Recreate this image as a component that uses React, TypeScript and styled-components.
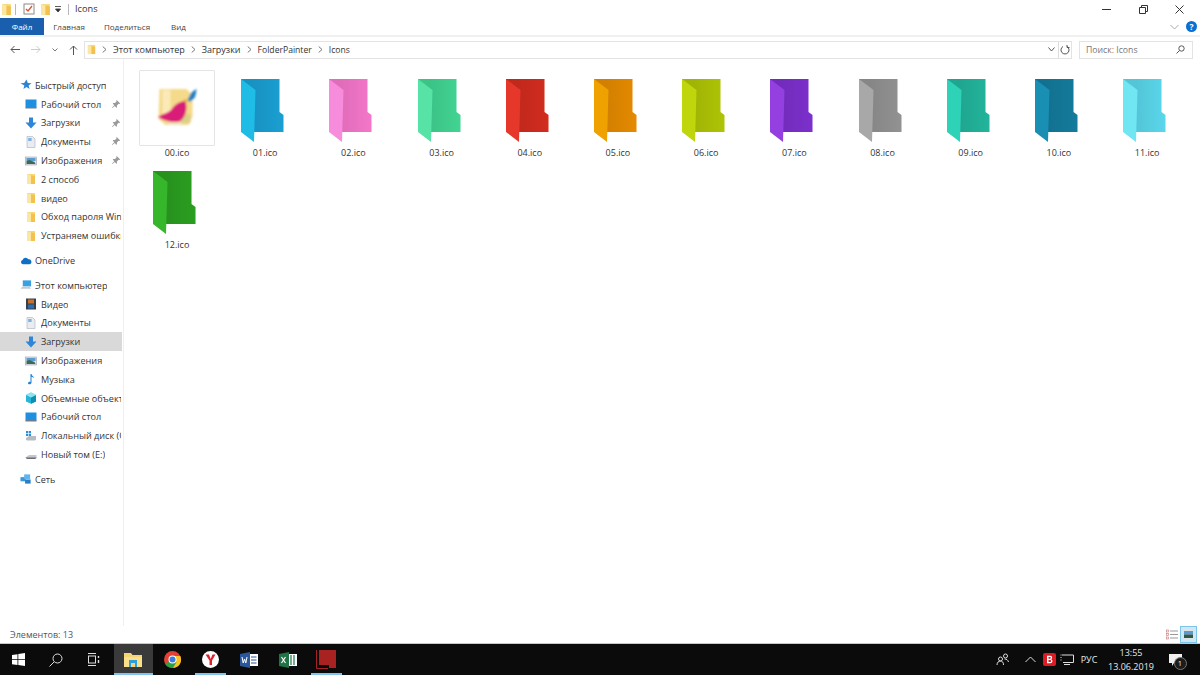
import styled, { createGlobalStyle } from "styled-components";
import { ReactNode } from "react";

const GlobalStyle = createGlobalStyle`
  html, body { margin: 0; padding: 0; background: #fff; overflow: hidden; }
  * { box-sizing: border-box; }
  body { font-family: "Open Sans", "Noto Sans", "Liberation Sans", sans-serif; color: #222; }
`;

const Page = styled.div`
  width: 1200px;
  height: 675px;
  display: flex;
  flex-direction: column;
`;

const TitleBar = styled.div`
  height: 18px;
  display: flex;
  align-items: center;
  padding-left: 0;
  font-size: 9.5px;
`;
const TitleSep = styled.span<{ $l: number; $r: number }>`
  width: 1px;
  height: 11px;
  background: #b8b8b8;
  margin: 0 ${(p) => p.$r}px 0 ${(p) => p.$l}px;
`;
const TitleGap = styled.span<{ $w: number }>`
  width: ${(p) => p.$w}px;
`;
const TitleText = styled.span`
  color: #333;
  font-size: 9.2px;
  margin-top: -1px;
`;
const WindowBtns = styled.div`
  margin-left: auto;
  display: flex;
  align-items: center;
  gap: 27.5px;
  padding-right: 16px;
`;

const RibbonRow = styled.div`
  height: 17px;
  display: flex;
  align-items: stretch;
`;
const FileTab = styled.div`
  width: 44px;
  background: #1a5fae;
  color: #fff;
  font-size: 8px;
  display: flex;
  align-items: center;
  justify-content: center;
`;
const RibbonTab = styled.div<{ $w: number }>`
  width: ${(p) => p.$w}px;
  font-size: 8px;
  color: #444;
  display: flex;
  align-items: center;
  justify-content: center;
`;
const RibbonRight = styled.div`
  margin-left: auto;
  display: flex;
  align-items: center;
  gap: 7px;
  padding-right: 3px;
`;
const HelpDot = styled.div`
  width: 11px;
  height: 11px;
  border-radius: 50%;
  background: #0a6fd0;
  color: #fff;
  font-size: 8.5px;
  font-weight: 700;
  display: flex;
  align-items: center;
  justify-content: center;
`;

const AddressRow = styled.div`
  height: 24px;
  border-top: 2px solid #f0f0f0;
  display: flex;
  align-items: center;
  padding: 3px 7px 0 0;
`;
const NavBtns = styled.div`
  width: 84px;
  display: flex;
  align-items: center;
  padding-left: 10px;
  gap: 11px;
`;
const AddressBox = styled.div`
  width: 988px;
  height: 18px;
  border: 1px solid #e3e3e3;
  display: flex;
  align-items: center;
  padding-left: 1px;
  font-size: 9px;
  color: #333;
`;
const AddressGap = styled.span`
  width: 5px;
`;
const Crumb = styled.span<{ $latin?: boolean }>`
  margin-right: 6px;
  font-size: ${(p) => (p.$latin ? 8.6 : 9)}px;
`;
const ChevronMark = styled.svg`
  margin-right: 6px;
  flex-shrink: 0;
`;
const AddressEnd = styled.div`
  margin-left: auto;
  display: flex;
  align-items: center;
  height: 100%;
`;
const AddressEndBtn = styled.div<{ $line?: boolean }>`
  width: 13px;
  height: 100%;
  display: flex;
  align-items: center;
  justify-content: center;
  border-left: ${(p) => (p.$line ? "1px solid #dcdcdc" : "0")};
`;
const SearchBox = styled.div`
  width: 114px;
  height: 18px;
  margin-left: 7px;
  border: 1px solid #e3e3e3;
  display: flex;
  align-items: center;
  justify-content: space-between;
  padding: 0 7px 0 6px;
  font-size: 8.7px;
  color: #777;
`;

const Body = styled.div`
  flex: 1;
  display: flex;
  min-height: 0;
`;
const Sidebar = styled.div`
  width: 124px;
  padding-top: 17px;
  border-right: 1px solid #f0f0f0;
  overflow: hidden;
  flex-shrink: 0;
`;
const NavRow = styled.div<{ $level: number; $active?: boolean; $gapTop?: number }>`
  width: 122px;
  height: 18.8px;
  margin-top: ${(p) => p.$gapTop ?? 0}px;
  padding-left: ${(p) => (p.$level === 0 ? 20 : 25)}px;
  padding-right: 1px;
  display: flex;
  align-items: center;
  gap: ${(p) => (p.$level === 0 ? 3 : 4)}px;
  background: ${(p) => (p.$active ? "#d9d9d9" : "transparent")};
  font-size: 9.1px;
  color: #333;
  white-space: nowrap;
  position: relative;
`;
const NavIcon = styled.span`
  width: 12px;
  height: 12px;
  flex-shrink: 0;
  display: flex;
  align-items: center;
  justify-content: center;
`;
const NavLabel = styled.span`
  overflow: hidden;
  min-width: 0;
`;
const Pin = styled.span`
  position: absolute;
  left: 111px;
  top: 4px;
  display: flex;
`;

const Files = styled.div`
  flex: 1;
  display: grid;
  grid-template-columns: repeat(12, 88.2px);
  grid-auto-rows: 92.4px;
  align-content: start;
  padding: 11px 0 0 15px;
`;
const FileItem = styled.div`
  width: 76px;
  height: 90px;
  display: flex;
  flex-direction: column;
  align-items: center;
`;
const Thumb = styled.div<{ $selected?: boolean }>`
  width: 76px;
  height: 76px;
  border: 1px solid ${(p) => (p.$selected ? "#e4e4e4" : "transparent")};
  border-radius: 1px;
  display: flex;
  justify-content: center;
  align-items: flex-start;
  padding: 8px 5px 0 0;
`;
const FileName = styled.div`
  font-size: 9px;
  color: #333;
  margin-top: 1px;
  line-height: 12px;
`;

const StatusBar = styled.div`
  height: 18px;
  display: flex;
  align-items: center;
  padding-left: 10px;
  font-size: 9px;
  color: #555;
  border-bottom: 1px solid #c8c8c8;
`;
const ViewBtns = styled.div`
  margin-left: auto;
  display: flex;
  align-items: center;
  padding-right: 3px;
`;
const ViewBtn = styled.div<{ $on?: boolean }>`
  width: 17px;
  height: 17px;
  display: flex;
  align-items: center;
  justify-content: center;
  background: ${(p) => (p.$on ? "#cfe8f8" : "transparent")};
  border: 1px solid ${(p) => (p.$on ? "#7cc4ea" : "transparent")};
`;

const Taskbar = styled.div`
  height: 31px;
  background: #0b0b0b;
  display: flex;
  align-items: stretch;
  color: #e8e8e8;
`;
const TaskBtn = styled.div<{ $w?: number; $active?: boolean; $open?: boolean }>`
  width: ${(p) => p.$w ?? 38.6}px;
  display: flex;
  align-items: center;
  justify-content: center;
  background: ${(p) => (p.$active ? "#3a3a3a" : "transparent")};
  position: relative;
  &::after {
    content: "";
    display: ${(p) => (p.$open ? "block" : "none")};
    position: absolute;
    left: ${(p) => (p.$active ? 0 : 4)}px;
    right: ${(p) => (p.$active ? 0 : 4)}px;
    bottom: 0;
    height: 2px;
    background: #7fc3ee;
  }
`;
const Tray = styled.div`
  margin-left: auto;
  display: flex;
  align-items: center;
  font-size: 9px;
  padding-right: 12px;
`;
const TrayItem = styled.div<{ $w: number }>`
  width: ${(p) => p.$w}px;
  display: flex;
  align-items: center;
  justify-content: center;
`;
const Clock = styled.div`
  width: 62px;
  text-align: center;
  font-size: 9px;
  line-height: 14px;
`;
const BadgeNum = styled.span`
  position: absolute;
  right: -5px;
  bottom: -4px;
  width: 13px;
  height: 13px;
  border-radius: 50%;
  background: #1c1c1c;
  border: 1px solid #777;
  color: #eee;
  font-size: 7.5px;
  display: flex;
  align-items: center;
  justify-content: center;
`;
const NotifyWrap = styled.div`
  position: relative;
  display: flex;
`;

const YellowFolder = ({ size = 12 }: { size?: number }) => (
  <svg width={size} height={size} viewBox="0 0 12 12">
    <path d="M2 1h8v10H2z" fill="#f8d775" />
    <path d="M2 1l4 1.5V11H2z" fill="#fbe6a4" />
    <path d="M6 2.5V11h4V3z" fill="#f2c14e" />
  </svg>
);

const FolderIcon = ({ id, back, front }: { id: string; back: string; front: string }) => (
  <svg width="43" height="64" viewBox="0 0 43 64">
    <defs>
      <linearGradient id={`shade-${id}`} x1="0" y1="0" x2="1" y2="0">
        <stop offset="0.3" stopColor="#000" stopOpacity="0.08" />
        <stop offset="1" stopColor="#000" stopOpacity="0" />
      </linearGradient>
    </defs>
    <path d="M0 0h38.5v33l4 3v17H0z" fill={back} />
    <path d="M0 0h38.5v33l4 3v17H0z" fill={`url(#shade-${id})`} />
    <path d="M0 0l14.500 11-1.500 52L0 53z" fill={front} />
  </svg>
);

const PinIcon = () => (
  <svg width="10" height="10" viewBox="0 0 10 10">
    <path d="M5.5 0.8l3.7 3.7-1 .6-.6-.3-1.7 1.7.1 1.7-.7.6-1.6-1.7L1.4 9l-.4-.4 2.3-2.4L1.7 4.6l.6-.7 1.7.1 1.7-1.7-.3-.6z" fill="#9a9a9a" />
  </svg>
);

const DesktopIcon = () => (
  <svg width="12" height="12" viewBox="0 0 12 12">
    <rect x="0.5" y="1.5" width="11" height="8" fill="#1f8fe0" />
    <rect x="0.5" y="9" width="11" height="1.5" fill="#6c7c8c" />
  </svg>
);
const DownloadIcon = () => (
  <svg width="12" height="12" viewBox="0 0 12 12">
    <path d="M4 0.5h4V5.5h3.5L6 11.5 .5 5.5H4z" fill="#2f85d8" />
  </svg>
);
const DocIcon = () => (
  <svg width="12" height="12" viewBox="0 0 12 12">
    <path d="M2 0.5h5.5L10 3v8.5H2z" fill="#e9edf2" stroke="#a8b0ba" strokeWidth=".6" />
    <rect x="3.2" y="2" width="3.4" height="3" fill="#7fb2e0" />
  </svg>
);
const PictureIcon = () => (
  <svg width="12" height="12" viewBox="0 0 12 12">
    <rect x="0.5" y="2" width="11" height="8" fill="#dfe3e8" stroke="#9aa0a8" strokeWidth=".6" />
    <path d="M1.5 3h9v3H1.5z" fill="#5a9ad0" />
    <path d="M1.5 6l3-1 5 2 1 2h-9z" fill="#3c6a58" />
  </svg>
);
const VideoIcon = () => (
  <svg width="12" height="12" viewBox="0 0 12 12">
    <rect x="1" y="0.5" width="10" height="11" fill="#3a3f46" />
    <rect x="3" y="1.5" width="6" height="4" fill="#c8702c" />
    <rect x="3" y="6.5" width="6" height="4" fill="#2d6eb0" />
  </svg>
);
const MusicIcon = () => (
  <svg width="12" height="12" viewBox="0 0 12 12">
    <path d="M5.5 1h1c.3 1.8 2 2.2 2.6 4-.8-.8-1.6-1.1-2.6-1.3V9.5C6.5 10.800 5.200 11.500 4 11.300 2.900 11.100 2.700 10 3.500 9.300 4.100 8.800 4.900 8.700 5.500 8.900z" fill="#1e80d8" />
  </svg>
);
const CubeIcon = () => (
  <svg width="12" height="12" viewBox="0 0 12 12">
    <path d="M6 0.500L11 3v6.500L6 11.800 1 9.500V3z" fill="#25b5d8" />
    <path d="M6 5.500L11 3v6.500L6 11.800z" fill="#0f8fb0" />
    <path d="M6 0.500L11 3 6 5.500 1 3z" fill="#8fe4f2" />
  </svg>
);
const DiskCIcon = () => (
  <svg width="12" height="12" viewBox="0 0 12 12">
    <path d="M1 8l3-2h7v3.500l-1 1H2L1 9.500z" fill="#b8bcc2" />
    <rect x="1" y="1" width="2.200" height="2.200" fill="#2a8fdc" />
    <rect x="3.800" y="1" width="2.200" height="2.200" fill="#2a8fdc" />
    <rect x="1" y="3.800" width="2.200" height="2.200" fill="#2a8fdc" />
    <rect x="3.800" y="3.800" width="2.200" height="2.200" fill="#2a8fdc" />
  </svg>
);
const DiskIcon = () => (
  <svg width="12" height="12" viewBox="0 0 12 12">
    <path d="M0.500 8.500l3.500-2.500h7.500v2.500l-1.500 1.500H2z" fill="#c4c7cb" />
    <path d="M2 10l-1.500-1.500h11V9l-1.500 1z" fill="#6b6f75" />
  </svg>
);
const StarIcon = () => (
  <svg width="12" height="12" viewBox="0 0 12 12">
    <path d="M6.500 .5l1.300 3.500 3.700.2-2.900 2.300 1 3.600-3.100-2-3.100 2 1-3.600L0.500 4.200l3.700-.2z" fill="#2d82d6" />
  </svg>
);
const CloudIcon = () => (
  <svg width="13" height="12" viewBox="0 0 13 12">
    <path d="M3 9.500a2.300 2.300 0 0 1-.2-4.500A3.400 3.400 0 0 1 9 4.100a2.700 2.700 0 0 1 1.200 5.400z" fill="#0f6fc6" />
  </svg>
);
const PcIcon = () => (
  <svg width="13" height="12" viewBox="0 0 13 12">
    <rect x="3" y="1" width="9" height="6.500" fill="#3aa0e4" />
    <path d="M0.500 10l2-2h8l1.500 2z" fill="#c6cbd1" />
  </svg>
);
const NetworkIcon = () => (
  <svg width="13" height="12" viewBox="0 0 13 12">
    <rect x="0.500" y="4" width="5.500" height="4.500" fill="#3a97dc" />
    <rect x="4.500" y="1" width="6.500" height="5" fill="#62b4ec" />
    <rect x="5.500" y="6.500" width="6" height="4.500" fill="#2a7ec4" />
  </svg>
);

type NavEntry = { label: string; level: number; icon: ReactNode; pin?: boolean; active?: boolean; gapTop?: number };

const navItems: NavEntry[] = [
  { label: "Быстрый доступ", level: 0, icon: <StarIcon /> },
  { label: "Рабочий стол", level: 1, icon: <DesktopIcon />, pin: true },
  { label: "Загрузки", level: 1, icon: <DownloadIcon />, pin: true },
  { label: "Документы", level: 1, icon: <DocIcon />, pin: true },
  { label: "Изображения", level: 1, icon: <PictureIcon />, pin: true },
  { label: "2 способ", level: 1, icon: <YellowFolder /> },
  { label: "видео", level: 1, icon: <YellowFolder /> },
  { label: "Обход пароля Windows", level: 1, icon: <YellowFolder /> },
  { label: "Устраняем ошибки", level: 1, icon: <YellowFolder /> },
  { label: "OneDrive", level: 0, icon: <CloudIcon />, gapTop: 6 },
  { label: "Этот компьютер", level: 0, icon: <PcIcon />, gapTop: 6 },
  { label: "Видео", level: 1, icon: <VideoIcon /> },
  { label: "Документы", level: 1, icon: <DocIcon /> },
  { label: "Загрузки", level: 1, icon: <DownloadIcon />, active: true },
  { label: "Изображения", level: 1, icon: <PictureIcon /> },
  { label: "Музыка", level: 1, icon: <MusicIcon /> },
  { label: "Объемные объекты", level: 1, icon: <CubeIcon /> },
  { label: "Рабочий стол", level: 1, icon: <DesktopIcon /> },
  { label: "Локальный диск (C:)", level: 1, icon: <DiskCIcon /> },
  { label: "Новый том (E:)", level: 1, icon: <DiskIcon /> },
  { label: "Сеть", level: 0, icon: <NetworkIcon />, gapTop: 6 },
];

const folders = [
  { name: "01.ico", back: "#1a9fd2", front: "#1fbce6" },
  { name: "02.ico", back: "#f476ca", front: "#f78cdc" },
  { name: "03.ico", back: "#41d492", front: "#57e2a6" },
  { name: "04.ico", back: "#d22c1e", front: "#e5382a" },
  { name: "05.ico", back: "#e58a00", front: "#efa100" },
  { name: "06.ico", back: "#aec405", front: "#c0d60c" },
  { name: "07.ico", back: "#7c30cc", front: "#9440e0" },
  { name: "08.ico", back: "#929292", front: "#a8a8a8" },
  { name: "09.ico", back: "#22b49c", front: "#2ed2b6" },
  { name: "10.ico", back: "#147b9c", front: "#1a8fb4" },
  { name: "11.ico", back: "#5ad6ea", front: "#70e6f2" },
  { name: "12.ico", back: "#2a9e20", front: "#36b62a" },
];

const PainterIcon = () => (
  <svg width="64" height="64" viewBox="0 0 64 64">
    <defs>
      <filter id="soft" x="-10%" y="-10%" width="120%" height="120%">
        <feGaussianBlur stdDeviation="0.8" />
      </filter>
    </defs>
    <g filter="url(#soft)" transform="translate(2.5 0)">
      <path d="M14 10h27l6 6v22l-4 8H20l-7-6z" fill="#f4da8a" />
      <path d="M17 11h8v24h-8z" fill="#fbeab8" />
      <path d="M35 35h10v9H35z" fill="#dcd088" />
      <path d="M22 43h14v3H22z" fill="#efe2b4" />
      <path d="M12.500 38C18 34 24 34 27 29C30 25 35 22 40 22C42 28 41 37 35 42C30 44 20 43 12.500 38z" fill="#d91d78" />
      <path d="M42 21l3-6c1-2 4-4 6-5 0 3-1 7-2 9-2 2-4 3-5 4z" fill="#2280c0" />
      <path d="M39 20l3 1-1 3-3-2z" fill="#e8b020" />
    </g>
  </svg>
);

const Chevron = () => (
  <ChevronMark width="5" height="7" viewBox="0 0 5 7">
    <path d="M.7.5L4 3.500.7 6.500" fill="none" stroke="#777" />
  </ChevronMark>
);

const App = () => (
  <>
    <GlobalStyle />
    <Page>
      <TitleBar>
        <YellowFolder size={13} />
        <TitleSep $l={2} $r={7} />
        <svg width="12" height="12" viewBox="0 0 12 12">
          <rect x="1" y="1" width="10" height="10" fill="#fff" stroke="#8a8a8a" />
          <path d="M3 6l2 2 4-5" fill="none" stroke="#e0502a" strokeWidth="1.300" />
        </svg>
        <TitleGap $w={4} />
        <YellowFolder size={13} />
        <TitleGap $w={2} />
        <svg width="8" height="8" viewBox="0 0 8 8">
          <path d="M1 1.500h6M1.500 4h5L4 7z" stroke="#333" strokeWidth=".8" fill="#333" />
        </svg>
        <TitleSep $l={6} $r={6} />
        <TitleText>Icons</TitleText>
        <WindowBtns>
          <svg width="9" height="9" viewBox="0 0 9 9">
            <path d="M0 4.500h9" stroke="#333" />
          </svg>
          <svg width="9" height="9" viewBox="0 0 9 9">
            <path d="M.5 2.500h6v6h-6zM2.500 2.500v-2h6v6h-2" fill="none" stroke="#333" />
          </svg>
          <svg width="9" height="9" viewBox="0 0 9 9">
            <path d="M.5.5l8 8M8.500.5l-8 8" stroke="#333" />
          </svg>
        </WindowBtns>
      </TitleBar>

      <RibbonRow>
        <FileTab>Файл</FileTab>
        <RibbonTab $w={50}>Главная</RibbonTab>
        <RibbonTab $w={66}>Поделиться</RibbonTab>
        <RibbonTab $w={37}>Вид</RibbonTab>
        <RibbonRight>
          <svg width="9" height="6" viewBox="0 0 9 6">
            <path d="M.5 1l4 4 4-4" fill="none" stroke="#aaa" />
          </svg>
          <HelpDot>?</HelpDot>
        </RibbonRight>
      </RibbonRow>

      <AddressRow>
        <NavBtns>
          <svg width="10" height="9" viewBox="0 0 10 9">
            <path d="M10 4.500H1M4.500 1L1 4.500 4.500 8" fill="none" stroke="#555" />
          </svg>
          <svg width="10" height="9" viewBox="0 0 10 9">
            <path d="M0 4.500h9M5.500 1L9 4.500 5.500 8" fill="none" stroke="#ccc" />
          </svg>
          <svg width="6" height="4" viewBox="0 0 6 4">
            <path d="M.5.500L3 3 5.500.500" fill="none" stroke="#777" />
          </svg>
          <svg width="9" height="10" viewBox="0 0 9 10">
            <path d="M4.500 10V1M1 4.500L4.500 1 8 4.500" fill="none" stroke="#555" />
          </svg>
        </NavBtns>
        <AddressBox>
          <YellowFolder size={11} />
          <AddressGap />
          <Chevron />
          <Crumb>Этот компьютер</Crumb>
          <Chevron />
          <Crumb>Загрузки</Crumb>
          <Chevron />
          <Crumb $latin>FolderPainter</Crumb>
          <Chevron />
          <Crumb $latin>Icons</Crumb>
          <AddressEnd>
            <AddressEndBtn>
              <svg width="7" height="5" viewBox="0 0 7 5">
                <path d="M.5.500L3.500 4 6.500.500" fill="none" stroke="#555" />
              </svg>
            </AddressEndBtn>
            <AddressEndBtn $line>
              <svg width="10" height="10" viewBox="0 0 10 10">
                <path d="M3 1.500A4 4 0 1 0 7 1.500M7 0v2.500h2.500" fill="none" stroke="#555" />
              </svg>
            </AddressEndBtn>
          </AddressEnd>
        </AddressBox>
        <SearchBox>
          <span>Поиск: Icons</span>
          <svg width="9" height="9" viewBox="0 0 9 9">
            <circle cx="5.500" cy="3.500" r="2.700" fill="none" stroke="#555" />
            <path d="M3.500 5.500L.5 8.500" stroke="#555" />
          </svg>
        </SearchBox>
      </AddressRow>

      <Body>
        <Sidebar>
          {navItems.map((item, i) => (
            <NavRow key={i} $level={item.level} $active={item.active} $gapTop={item.gapTop}>
              <NavIcon>{item.icon}</NavIcon>
              <NavLabel>{item.label}</NavLabel>
              {item.pin && (
                <Pin>
                  <PinIcon />
                </Pin>
              )}
            </NavRow>
          ))}
        </Sidebar>
        <Files>
          <FileItem>
            <Thumb $selected>
              <PainterIcon />
            </Thumb>
            <FileName>00.ico</FileName>
          </FileItem>
          {folders.map((f) => (
            <FileItem key={f.name}>
              <Thumb>
                <FolderIcon id={f.name} back={f.back} front={f.front} />
              </Thumb>
              <FileName>{f.name}</FileName>
            </FileItem>
          ))}
        </Files>
      </Body>

      <StatusBar>
        Элементов: 13
        <ViewBtns>
          <ViewBtn>
            <svg width="12" height="11" viewBox="0 0 12 11">
              <path d="M4 2h8M4 5.500h8M4 9h8" stroke="#999" />
              <rect x="0.500" y="1" width="2" height="2" fill="none" stroke="#c88" strokeWidth=".7" />
              <rect x="0.500" y="4.500" width="2" height="2" fill="none" stroke="#c88" strokeWidth=".7" />
              <rect x="0.500" y="8" width="2" height="2" fill="none" stroke="#c88" strokeWidth=".7" />
            </svg>
          </ViewBtn>
          <ViewBtn $on>
            <svg width="11" height="9" viewBox="0 0 11 9">
              <rect width="11" height="9" fill="#dfe3e8" />
              <rect x="1" y="1" width="9" height="3.500" fill="#5a9ad0" />
              <path d="M1 4.500h9V8H1z" fill="#2f5a48" />
            </svg>
          </ViewBtn>
        </ViewBtns>
      </StatusBar>

      <Taskbar>
        <TaskBtn $w={37}>
          <svg width="13" height="13" viewBox="0 0 13 13">
            <path d="M0 2l5.500-.8v5H0zM6.300 1.100L13 0v6.200H6.300zM0 7h5.500v5L0 11.200zM6.300 7H13v6l-6.700-1z" fill="#fff" />
          </svg>
        </TaskBtn>
        <TaskBtn>
          <svg width="14" height="14" viewBox="0 0 14 14">
            <circle cx="8.500" cy="5.500" r="4.500" fill="none" stroke="#ddd" />
            <path d="M5 9l-4.500 4.500" stroke="#ddd" />
          </svg>
        </TaskBtn>
        <TaskBtn>
          <svg width="14" height="13" viewBox="0 0 14 13">
            <rect x="0.500" y="3" width="7" height="7" fill="none" stroke="#ddd" />
            <path d="M0 .5h8M0 12.500h8" stroke="#ddd" />
            <path d="M10.500 3v2M10.500 7v3" stroke="#ddd" strokeWidth="1.400" />
          </svg>
        </TaskBtn>
        <TaskBtn $active $open>
          <svg width="18" height="15" viewBox="0 0 18 15">
            <path d="M0 1h7l1.500 2H18v12H0z" fill="#f5d376" />
            <rect x="0" y="5" width="18" height="10" fill="#fbe08a" />
            <rect x="5" y="8" width="8" height="7" fill="#2f9ee0" />
            <rect x="7" y="11" width="4" height="4" fill="#f5d376" />
          </svg>
        </TaskBtn>
        <TaskBtn>
          <svg width="17" height="17" viewBox="0 0 17 17">
            <circle cx="8.500" cy="8.500" r="8.500" fill="#e34133" />
            <path d="M8.500 17a8.500 8.500 0 0 0 7.800-12L8.500 5z" fill="#f7c325" />
            <path d="M8.500 8.500L1.100 12.800A8.500 8.500 0 0 0 9 17l3.500-6z" fill="#2f9e44" />
            <circle cx="8.500" cy="8.500" r="4" fill="#fff" />
            <circle cx="8.500" cy="8.500" r="3" fill="#3b7de0" />
          </svg>
        </TaskBtn>
        <TaskBtn $open>
          <svg width="17" height="17" viewBox="0 0 17 17">
            <circle cx="8.500" cy="8.500" r="8.500" fill="#fff" />
            <path d="M3.500 3.500l3.500 0L8.700 8 10.500 3.500H13.500L10 9.500V14H7.500V9.500z" fill="#e0202a" />
          </svg>
        </TaskBtn>
        <TaskBtn>
          <svg width="18" height="16" viewBox="0 0 18 16">
            <rect x="6" y="2" width="12" height="12" fill="#fff" />
            <path d="M11 5h5.500M11 8h5.500M11 11h5.500" stroke="#2b579a" strokeWidth="1.200" />
            <path d="M0 2l10-2v16L0 14z" fill="#2b579a" />
            <path d="M2 5l1.200 6 1.300-4 1.300 4L7 5" fill="none" stroke="#fff" />
          </svg>
        </TaskBtn>
        <TaskBtn>
          <svg width="18" height="16" viewBox="0 0 18 16">
            <rect x="6" y="2" width="12" height="12" fill="#fff" />
            <path d="M12 3v10M15 3v10" stroke="#217346" strokeWidth="1.200" />
            <path d="M0 2l10-2v16L0 14z" fill="#217346" />
            <path d="M2.500 5l4 6M6.500 5l-4 6" fill="none" stroke="#fff" strokeWidth="1.200" />
          </svg>
        </TaskBtn>
        <TaskBtn $open>
          <svg width="20" height="19" viewBox="0 0 20 19">
            <rect x="3" y="0" width="17" height="15" fill="#a82222" />
            <rect x="13" y="15" width="7" height="3" fill="#a82222" />
            <path d="M.5 0v18.500H12" fill="none" stroke="#a82222" />
          </svg>
        </TaskBtn>
        <Tray>
          <TrayItem $w={32}>
            <svg width="13" height="13" viewBox="0 0 13 13">
              <circle cx="4.500" cy="6" r="2" fill="none" stroke="#ddd" />
              <circle cx="9.500" cy="3" r="2" fill="none" stroke="#ddd" />
              <path d="M1 12c0-2.500 1.500-4 3.500-4s3 1.500 3 4M8.500 6c2 0 3.500 1 4 3" fill="none" stroke="#ddd" />
            </svg>
          </TrayItem>
          <TrayItem $w={24}>
            <svg width="11" height="7" viewBox="0 0 11 7">
              <path d="M.5 6l5-5 5 5" fill="none" stroke="#ddd" />
            </svg>
          </TrayItem>
          <TrayItem $w={14}>
            <svg width="13" height="13" viewBox="0 0 13 13">
              <rect width="13" height="13" rx="2" fill="#dc1c24" />
              <path d="M4 2.800h3.200c2.400 0 2.400 3 .8 3.400 2 .4 2 4-.8 4H4zM5.500 4v1.700h1.600c.9 0 .9-1.700 0-1.700zM5.500 6.900V9h1.800c1.100 0 1.100-2.100 0-2.100z" fill="#fff" />
            </svg>
          </TrayItem>
          <TrayItem $w={22}>
            <svg width="14" height="12" viewBox="0 0 14 12">
              <path d="M2 1h11.500v7.500H3M4 10.500h6" fill="none" stroke="#ddd" />
              <path d="M.5 1h2M.5 3.500h2M.5 6h2" stroke="#ddd" strokeDasharray="1 1" />
            </svg>
          </TrayItem>
          <TrayItem $w={22}>РУС</TrayItem>
          <Clock>
            13:55
            <br />
            13.06.2019
          </Clock>
          <TrayItem $w={26}>
            <NotifyWrap>
              <svg width="13" height="12" viewBox="0 0 13 12">
                <path d="M0 0h13v9H5l-2 3V9H0z" fill="#f0f0f0" />
              </svg>
              <BadgeNum>1</BadgeNum>
            </NotifyWrap>
          </TrayItem>
        </Tray>
      </Taskbar>
    </Page>
  </>
);

export default App;
